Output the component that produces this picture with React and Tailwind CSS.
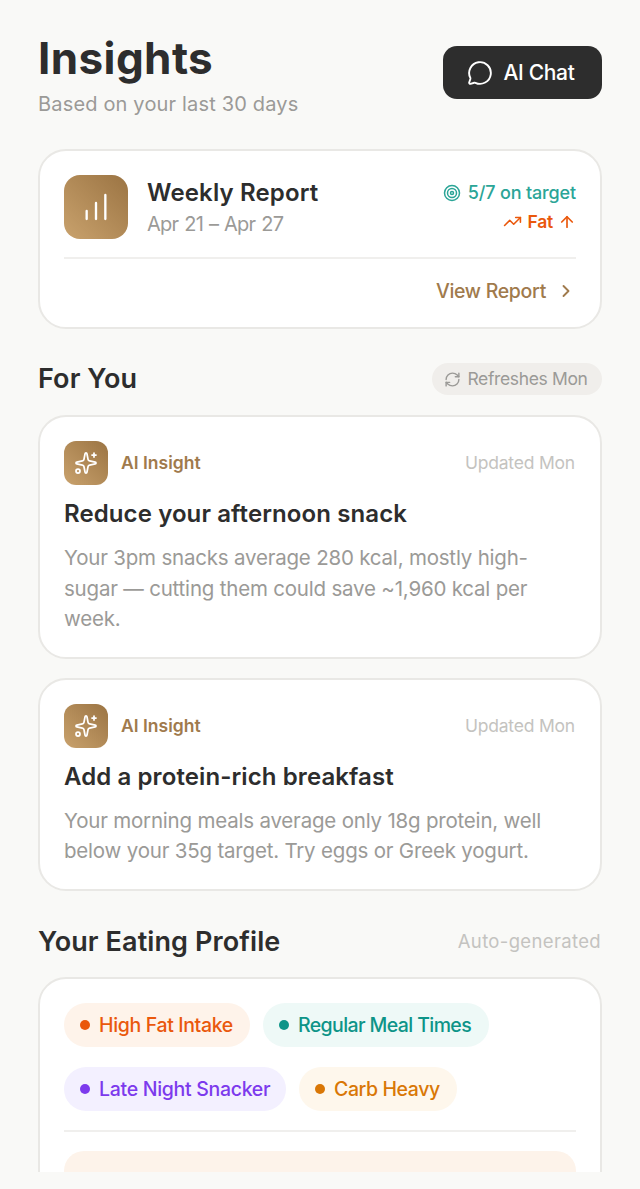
import { ArrowUp, ChartNoAxesColumnIncreasing, ChevronRight, MessageCircle, RefreshCw, Sparkles, Target, TrendingUp } from "lucide-react";

const chips = [
  [
    { label: "High Fat Intake", box: "w-[186px] bg-[#fef3ea] text-[#ea580c] tracking-[-0.35px]", dot: "bg-[#ea580c]" },
    { label: "Regular Meal Times", box: "w-[226px] bg-[#eef9f7] text-[#0d9488] tracking-[-0.6px]", dot: "bg-[#0d9488]" },
  ],
  [
    { label: "Late Night Snacker", box: "w-[222px] bg-[#f3f0ff] text-[#7c3aed] tracking-[-0.3px]", dot: "bg-[#7c3aed]" },
    { label: "Carb Heavy", box: "w-[158px] bg-[#fef7ec] text-[#d97706] tracking-[-0.4px]", dot: "bg-[#d97706]" },
  ],
];

function InsightCard({ title, lines }) {
  return (
    <div className="rounded-[28px] border-2 border-[#e9e8e5] bg-white px-6 pt-6 pb-[22px]">
      <div className="flex items-center justify-between">
        <div className="flex items-center gap-[13px]">
          <div className="flex h-11 w-11 items-center justify-center rounded-xl bg-linear-to-tr from-[#c9a26d] to-[#9b7443] text-white">
            <Sparkles size={24} strokeWidth={1.75} />
          </div>
          <span className="text-[17.5px] font-semibold text-[#a07a4c]">AI Insight</span>
        </div>
        <span className="pr-px text-[17.5px] tracking-[-0.2px] text-[#c4c3c0]">Updated Mon</span>
      </div>
      <h3 className="mt-[11px] text-[24px] leading-[36px] font-semibold tracking-[0.1px] text-[#2d2d2d]">{title}</h3>
      <p className="mt-[11px] text-[20.5px] leading-[30.6px] tracking-[-0.2px] text-[#9b9a97]">
        {lines.map((line) => (
          <span key={line} className="block whitespace-nowrap">{line}</span>
        ))}
      </p>
    </div>
  );
}

export default function App() {
  return (
    <div className="h-[1189px] w-[640px] overflow-hidden bg-[#f9f9f7] font-['Inter',sans-serif]">
      <div className="h-[1172px] overflow-hidden px-[38px] pt-[30px]">
        <header className="flex items-start justify-between">
          <div>
            <h1 className="text-[44px] leading-[56px] font-bold tracking-[0.4px] text-[#2d2d2d]">Insights</h1>
            <p className="mt-[2px] text-[20px] leading-[32px] tracking-[0.17px] text-[#9b9a97]">Based on your last 30 days</p>
          </div>
          <button className="mt-4 flex h-[53px] w-[159px] items-center justify-center gap-[11px] rounded-[14px] bg-[#2d2d2d] pr-1 text-[21px] font-medium tracking-[-0.35px] text-white">
            <MessageCircle size={26} strokeWidth={1.75} />
            AI Chat
          </button>
        </header>

        <section className="mt-[29px] h-[180px] rounded-[28px] border-2 border-[#e9e8e5] bg-white px-6 pt-6">
          <div className="flex items-center justify-between border-b-2 border-[#f0efed] pb-[18px]">
            <div className="flex items-center gap-[19px]">
              <div className="flex h-16 w-16 items-center justify-center rounded-2xl bg-linear-to-tr from-[#c9a26d] to-[#9b7443] text-white">
                <ChartNoAxesColumnIncreasing size={32} strokeWidth={1.75} />
              </div>
              <div>
                <div className="text-[24px] leading-[34px] font-semibold tracking-[0.14px] text-[#2d2d2d]">Weekly Report</div>
                <div className="text-[20px] leading-[28px] tracking-[-0.75px] [word-spacing:1px] text-[#9b9a97]">Apr 21 – Apr 27</div>
              </div>
            </div>
            <div className="flex flex-col items-end gap-[3px]">
              <div className="flex items-center gap-[7px] text-[18px] leading-[26px] font-medium tracking-[-0.15px] text-[#2ba597]">
                <Target size={18} strokeWidth={2} />
                5/7 on target
              </div>
              <div className="flex items-center gap-[5px] text-[17.5px] leading-[26px] font-semibold tracking-[-0.2px] text-[#ea580c]">
                <TrendingUp size={19} strokeWidth={2} />
                Fat
                <ArrowUp size={18} strokeWidth={2.25} />
              </div>
            </div>
          </div>
          <div className="mt-[18px] flex items-center justify-end gap-[10px] text-[19.5px] leading-[28px] font-medium tracking-[-0.3px] text-[#a07a4c]">
            View Report
            <ChevronRight size={20} strokeWidth={2.25} />
          </div>
        </section>

        <div className="mt-[34px] flex items-center justify-between">
          <h2 className="text-[27px] leading-[32px] font-semibold tracking-[0.1px] text-[#2d2d2d]">For You</h2>
          <div className="flex h-8 w-[170px] items-center justify-center gap-[6px] rounded-full bg-[#f0eeeb] pr-[2px] text-[17.5px] tracking-[-0.35px] text-[#9b9a97]">
            <RefreshCw size={17} strokeWidth={2} />
            Refreshes Mon
          </div>
        </div>

        <div className="mt-[20px] flex flex-col gap-[19px]">
          <InsightCard
            title="Reduce your afternoon snack"
            lines={["Your 3pm snacks average 280 kcal, mostly high-", "sugar — cutting them could save ~1,960 kcal per", "week."]}
          />
          <InsightCard
            title="Add a protein-rich breakfast"
            lines={["Your morning meals average only 18g protein, well", "below your 35g target. Try eggs or Greek yogurt."]}
          />
        </div>

        <div className="mt-[35px] flex items-center justify-between">
          <h2 className="text-[27px] leading-[32px] font-semibold tracking-[0.1px] text-[#2d2d2d]">Your Eating Profile</h2>
          <span className="pr-px text-[18.5px] tracking-[0.35px] text-[#c4c3c0]">Auto-generated</span>
        </div>

        <section className="mt-[19px] rounded-[28px] border-2 border-[#e9e8e5] bg-white px-6 pt-6 pb-6">
          <div className="flex flex-col gap-5">
            {chips.map((row, i) => (
              <div key={i} className="flex gap-[13px]">
                {row.map((chip) => (
                  <div key={chip.label} className={`flex h-11 items-center gap-[9px] rounded-full pt-px pl-4 text-[19.5px] font-medium ${chip.box}`}>
                    <span className={`h-[10px] w-[10px] rounded-full ${chip.dot}`} />
                    {chip.label}
                  </div>
                ))}
              </div>
            ))}
          </div>
          <div className="mt-[19px] border-t-2 border-[#f0efed] pt-[19px]">
            <div className="h-[80px] rounded-[20px] bg-[#fdf3ea]" />
          </div>
        </section>
      </div>
    </div>
  );
}
